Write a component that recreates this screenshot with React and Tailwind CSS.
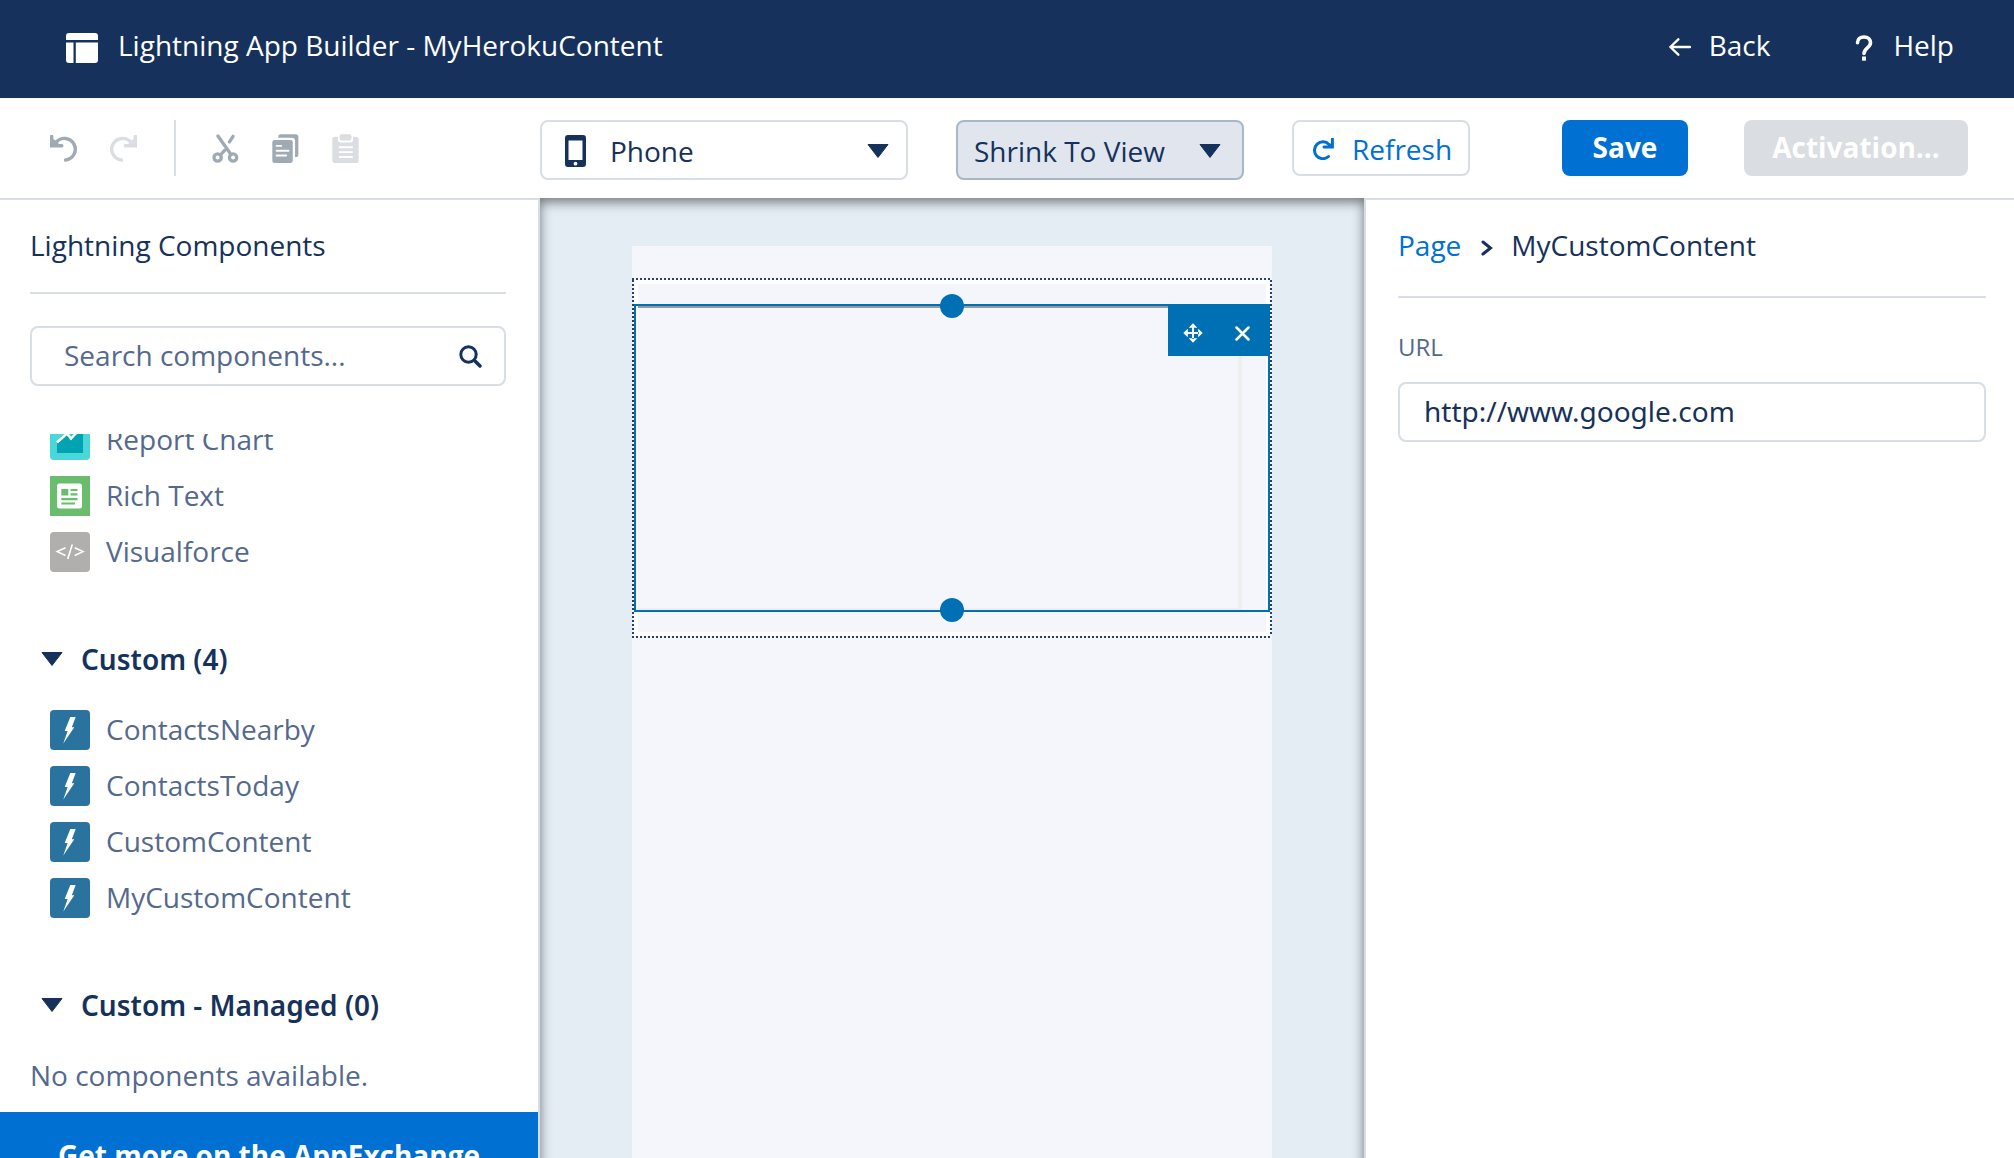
const UndoIcon = ({ className }) => (
  <svg viewBox="62 72 80 80" className={className} fill="none" stroke="currentColor" strokeWidth="10" aria-hidden="true">
    <path d="M108 146A32 32 0 1 0 80 94" strokeLinecap="round" />
    <path d="M67 76V104H97" strokeLinecap="round" />
    <path d="M64 102V82L76 86L88 98V102Z" fill="currentColor" stroke="none" />
  </svg>
);

const CutIcon = () => (
  <svg viewBox="548 68 80 88" className="w-[27px] h-[29px]" fill="none" stroke="currentColor" strokeWidth="10" strokeLinecap="round" aria-hidden="true">
    <path d="M565 74L603 128M611 75L600 92M586 117L573 131" />
    <circle cx="564" cy="139" r="11" />
    <circle cx="611" cy="139" r="11" />
  </svg>
);

const CopyIcon = () => (
  <svg viewBox="728 68 80 88" className="w-[27px] h-[29px]" fill="currentColor" aria-hidden="true">
    <path d="M746 79v-3q0-7 7-7h46q8 0 8 8v55q0 6-6 6h-4v-49q0-10-10-10z" />
    <rect x="728" y="86" width="62" height="70" rx="7" />
    <path d="M741 104h14M741 119h36M741 133h29" stroke="#fff" strokeWidth="6" strokeLinecap="round" />
  </svg>
);

const PasteIcon = () => (
  <svg viewBox="908 68 80 88" className="w-[27px] h-[29px]" fill="currentColor" aria-hidden="true">
    <rect x="908" y="76" width="80" height="80" rx="8" />
    <rect x="925" y="62" width="46" height="32" rx="9" fill="#fff" />
    <rect x="930" y="69" width="36" height="19" rx="6" />
    <path d="M928 108h42M928 123h42M928 138h42" stroke="#fff" strokeWidth="6" />
  </svg>
);

const Triangle = ({ className }) => (
  <svg viewBox="0 0 22 14" className={className} aria-hidden="true">
    <path d="M1 .5H21L11 13.500Z" fill="currentColor" stroke="currentColor" strokeLinejoin="round" />
  </svg>
);

const BoltIcon = () => (
  <svg viewBox="0 0 40 40" className="size-10 shrink-0" aria-hidden="true">
    <rect width="40" height="40" rx="4" fill="#2a739e" />
    <path d="M20.300 7H25.700L21.800 17.300H24.300L13.300 33.500L17.600 21H14.700Z" fill="#fff" />
  </svg>
);

const ChartIcon = () => (
  <svg viewBox="0 0 40 40" className="size-10 shrink-0" aria-hidden="true">
    <rect width="40" height="40" rx="4" fill="#4bd6d9" />
    <path d="M7 22L17 12L21 16L27 10H33V33H7Z" fill="#00a4b0" />
    <path d="M7 22.500L17 13.500L21 18.500L29 10" fill="none" stroke="#fff" strokeWidth="2.500" />
  </svg>
);

const RichTextIcon = () => (
  <svg viewBox="0 0 40 40" className="size-10 shrink-0" aria-hidden="true">
    <rect width="40" height="40" fill="#6bbd6e" />
    <rect x="7" y="7.500" width="25" height="25" rx="2.500" fill="#fff" />
    <path d="M11.300 13h7v6.500h-7zM20.500 13h7v2h-7zM20.500 17.300h7v2.200h-7zM11.300 22h16.200v2.200H11.300zM11.300 26.400h13.700v2.200H11.300z" fill="#6bbd6e" />
  </svg>
);

const CodeIcon = () => (
  <svg viewBox="0 0 40 40" className="size-10 shrink-0" aria-hidden="true">
    <rect width="40" height="40" rx="4" fill="#b0afad" />
    <path d="M15.500 15.700L7.200 19.600L15.500 23.500M22.300 12.500L17.700 27M24.700 15.700L33 19.600L24.700 23.500" fill="none" stroke="#fff" strokeWidth="1.600" />
  </svg>
);

const Item = ({ icon, children }) => (
  <li className="flex gap-4 leading-[38px] text-[#54698d]">
    {icon}
    <a href="#component">{children}</a>
  </li>
);

const SectionHeading = ({ children }) => (
  <h3 className="font-['Noto_Sans','Open_Sans',sans-serif] font-semibold leading-10">
    <button type="button" className="flex items-center gap-[18px] pl-[11px]">
      <Triangle className="w-[22px] h-[14px]" />
      {children}
    </button>
  </h3>
);

const CUSTOM = ["ContactsNearby", "ContactsToday", "CustomContent", "MyCustomContent"];

function Header() {
  return (
    <header className="flex h-[98px] shrink-0 items-start justify-between bg-[#16325c] pt-[25px] pr-[60px] pl-[66px] leading-10 text-white">
      <div className="flex items-center gap-5">
        <svg viewBox="0 0 32 30" className="mt-1.5 h-[30px] w-8" fill="currentColor" aria-hidden="true">
          <path d="M0 7V3Q0 0 3 0H29Q32 0 32 3V7ZM0 9.500H7.500V30H3Q0 30 0 27ZM9.800 9.500H32V27Q32 30 29 30H9.800Z" />
        </svg>
        <h1>Lightning App Builder - MyHerokuContent</h1>
      </div>
      <nav className="flex gap-[85px]">
        <a href="#back" className="flex items-center gap-[18px]">
          <svg viewBox="78 55 66 54" className="mt-1 h-[18px] w-[22px]" fill="none" stroke="currentColor" strokeWidth="7" strokeLinecap="round" strokeLinejoin="round" aria-hidden="true">
            <path d="M141 82H82M106 59L82 82L106 105" />
          </svg>
          Back
        </a>
        <a href="#help" className="flex items-center gap-5">
          <svg viewBox="642 45 52 80" className="mt-1.5 h-[26px] w-[18px]" fill="none" stroke="currentColor" strokeWidth="11" strokeLinecap="round" aria-hidden="true">
            <path d="M648 69C648 57 657 51 668 51C680 51 688 59 688 69C688 85 668 84 668 102" />
            <path d="M662 111h12v13h-12z" fill="currentColor" stroke="none" />
          </svg>
          Help
        </a>
      </nav>
    </header>
  );
}

function Toolbar() {
  return (
    <div className="flex h-[100px] shrink-0 items-start pt-[22px] pr-[46px]">
      <div className="flex h-14 w-[540px] shrink-0 items-center pl-[50px] text-[#9faab5]">
        <div className="flex gap-[33px]">
          <button type="button" aria-label="Undo">
            <UndoIcon className="size-[27px]" />
          </button>
          <button type="button" aria-label="Redo" disabled className="text-[#dadde1]">
            <UndoIcon className="size-[27px] -scale-x-100" />
          </button>
        </div>
        <div className="mr-9 ml-[37px] h-14 w-0.5 bg-[#d8dde6]" />
        <div className="flex gap-[33px]">
          <button type="button" aria-label="Cut"><CutIcon /></button>
          <button type="button" aria-label="Copy"><CopyIcon /></button>
          <button type="button" aria-label="Paste" disabled className="text-[#dadde1]"><PasteIcon /></button>
        </div>
      </div>

      <div className="relative w-[368px]">
        <svg viewBox="0 0 21 32" className="pointer-events-none absolute top-[15px] left-[25px] h-8 w-[21px]" aria-hidden="true">
          <path fillRule="evenodd" fill="currentColor" d="M3 0H18Q21 0 21 3V29Q21 32 18 32H3Q0 32 0 29V3Q0 0 3 0ZM3.500 5.500V25H17.500V5.500ZM10.500 26.800A1.900 1.900 0 1 0 10.500 30.600A1.900 1.900 0 1 0 10.500 26.800Z" />
        </svg>
        <select aria-label="Device" className="h-[60px] w-full appearance-none rounded-lg border-2 border-[#d8dde6] bg-transparent pt-0.5 pl-[68px]">
          <option>Phone</option>
        </select>
        <Triangle className="pointer-events-none absolute top-[24px] right-[19px] h-[14px] w-[22px]" />
      </div>

      <div className="relative ml-12 w-[288px]">
        <select aria-label="Zoom" className="h-[60px] w-full appearance-none rounded-lg border-2 border-[#a8b7c7] bg-[#e0e5ee] pt-0.5 pl-4">
          <option>Shrink To View</option>
        </select>
        <Triangle className="pointer-events-none absolute top-[24px] right-[23px] h-[14px] w-[22px]" />
      </div>

      <button type="button" className="ml-12 flex h-14 items-center gap-[18px] rounded-lg border-2 border-[#d8dde6] pt-0.5 pr-4 pl-[18px] text-[#0070d2]">
        <svg viewBox="0 0 22 22" className="size-[22px]" fill="none" stroke="currentColor" strokeWidth="3" aria-hidden="true">
          <path d="M16.500 18.500A8.400 8.400 0 1 1 17 6.500" strokeLinecap="round" />
          <path d="M20.400 1V9H12" strokeLinecap="round" />
          <path d="M21 3.500V9.500H14Z" fill="currentColor" stroke="none" />
        </svg>
        Refresh
      </button>

      <div className="ml-auto flex gap-14 font-bold text-white">
        <button type="button" className="h-14 w-[126px] rounded-lg bg-[#0070d2] pb-0.5">Save</button>
        <button type="button" disabled className="h-14 w-56 rounded-lg bg-[#dadde1] pb-0.5">Activation...</button>
      </div>
    </div>
  );
}

function ComponentsPanel() {
  return (
    <aside className="flex w-[540px] shrink-0 flex-col border-t-2 border-r-2 border-[#d8dde6]">
      <div className="flex flex-col gap-8 pt-[25px] pr-8 pl-[30px]">
        <h2 className="border-b-2 border-[#d8dde6] pb-[27px] leading-10">Lightning Components</h2>
        <div className="relative">
          <input
            type="text"
            aria-label="Search components"
            placeholder="Search components..."
            className="h-[60px] w-full rounded-lg border-2 border-[#d8dde6] pr-16 pb-0.5 pl-8 placeholder:text-[#54698d]"
          />
          <svg viewBox="0 0 23 23" className="pointer-events-none absolute top-[19px] right-[24px] size-[23px]" fill="none" stroke="currentColor" strokeWidth="3" strokeLinecap="round" aria-hidden="true">
            <circle cx="9.500" cy="9.500" r="7.700" />
            <path d="M15.500 15.500L21 21" strokeWidth="3.500" />
          </svg>
        </div>
      </div>

      <div className="mt-12 min-h-0 flex-1 overflow-hidden">
        <ul className="-mt-3.5 flex flex-col gap-4 pl-[50px]">
          <Item icon={<ChartIcon />}>Report Chart</Item>
          <Item icon={<RichTextIcon />}>Rich Text</Item>
          <Item icon={<CodeIcon />}>Visualforce</Item>
        </ul>
        <div className="mt-[67px] px-[30px]">
          <SectionHeading>Custom (4)</SectionHeading>
        </div>
        <ul className="mt-[31px] flex flex-col gap-4 pl-[50px]">
          {CUSTOM.map((name) => (
            <Item key={name} icon={<BoltIcon />}>{name}</Item>
          ))}
        </ul>
        <div className="mt-[67px] px-[30px]">
          <SectionHeading>Custom - Managed (0)</SectionHeading>
          <p className="mt-[30px] leading-10 text-[#54698d]">No components available.</p>
        </div>
      </div>

      <a href="#appexchange" className="h-[46px] shrink-0 overflow-hidden bg-[#0070d2] pt-[23px] text-center leading-10 font-bold text-white">
        Get more on the AppExchange
      </a>
    </aside>
  );
}

const DOTS_X = "h-0.5 bg-[repeating-linear-gradient(90deg,#293f68_0_2px,transparent_2px_4px)]";
const DOTS_Y = "w-0.5 bg-[repeating-linear-gradient(180deg,#293f68_0_2px,transparent_2px_4px)]";

function Canvas() {
  return (
    <main className="-mb-6 flex min-w-0 flex-1 justify-center bg-[#e4ecf4] pt-12 shadow-[inset_0_4px_12px_rgba(0,0,0,0.5)]">
      <div className="w-[640px] bg-[#f4f6fb] pt-8">
        <div className={DOTS_X} />
        <div className="flex">
          <div className={DOTS_Y} />
          <section className="flex-1 py-6 shadow-[inset_0_0_0_4px_#fff]">
            <div className="relative h-[308px] border-2 border-[#0070b5] px-0.5">
              <div className="mr-6 h-full border-t-2 border-r-4 border-b-2 border-t-[#999999] border-r-[#eeeff0] border-b-[#eeeff0]" />
              <div className="absolute -top-3 left-1/2 size-6 -translate-x-1/2 rounded-full bg-[#0070b5]" />
              <div className="absolute -bottom-3 left-1/2 size-6 -translate-x-1/2 rounded-full bg-[#0070b5]" />
              <div className="absolute -top-0.5 -right-0.5 flex h-[52px] w-[102px] items-center gap-8 bg-[#0070b5] pt-1.5 pl-[15px] text-white">
                <button type="button" aria-label="Move">
                  <svg viewBox="0 0 20 20" className="size-5" fill="currentColor" aria-hidden="true">
                    <path d="M9 4h2v12H9zM4 9h12v2H4zM10 .3L14.300 4.800H5.700ZM10 19.700L14.300 15.200H5.700ZM.3 10L4.800 5.700V14.300ZM19.700 10L15.200 5.700V14.300Z" />
                  </svg>
                </button>
                <button type="button" aria-label="Remove">
                  <svg viewBox="0 0 15 15" className="size-[15px]" fill="none" stroke="currentColor" strokeWidth="2.500" strokeLinecap="round" aria-hidden="true">
                    <path d="M1.500 1.500L13.500 13.500M13.500 1.500L1.500 13.500" />
                  </svg>
                </button>
              </div>
            </div>
          </section>
          <div className={DOTS_Y} />
        </div>
        <div className={DOTS_X} />
      </div>
    </main>
  );
}

function PropertiesPanel() {
  return (
    <aside className="w-[650px] shrink-0 border-t-2 border-l-2 border-[#d8dde6] pt-[25px] pr-7 pl-8">
      <nav aria-label="Breadcrumb" className="flex items-center border-b-2 border-[#d8dde6] pb-[31px] leading-10">
        <a href="#page" className="text-[#0070d2]">Page</a>
        <svg viewBox="0 0 12 16" className="mt-1.5 mr-[18px] ml-5 h-4 w-3" fill="none" stroke="currentColor" strokeWidth="3" strokeLinecap="round" aria-hidden="true">
          <path d="M2 2L9.500 8L2 14" />
        </svg>
        <span>MyCustomContent</span>
      </nav>
      <label htmlFor="url" className="mt-8 block text-2xl leading-[34px] text-[#54698d]">URL</label>
      <input
        id="url"
        type="text"
        defaultValue="http://www.google.com"
        className="mt-[18px] h-[60px] w-full rounded-lg border-2 border-[#d8dde6] pb-0.5 pl-6 font-['Noto_Sans','Open_Sans',sans-serif]"
      />
    </aside>
  );
}

export default function App() {
  return (
    <div className="flex h-screen flex-col overflow-hidden bg-white font-['Open_Sans','Noto_Sans',sans-serif] text-[28px] text-[#16325c]">
      <Header />
      <Toolbar />
      <div className="flex min-h-0 flex-1">
        <ComponentsPanel />
        <Canvas />
        <PropertiesPanel />
      </div>
    </div>
  );
}
